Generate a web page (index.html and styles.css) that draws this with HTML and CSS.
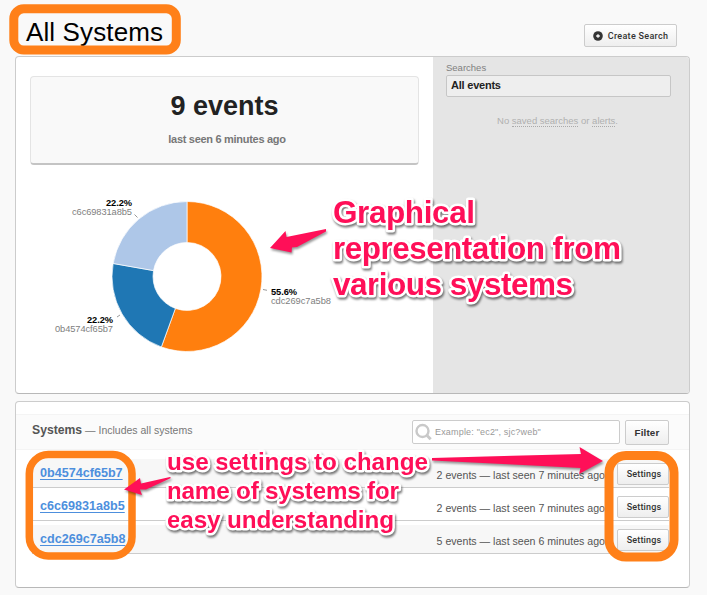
FILE: index.html
```html
<!DOCTYPE html>
<html lang="en">
<head>
<meta charset="utf-8">
<title>All Systems</title>
<link rel="stylesheet" href="styles.css">
</head>
<body>
<header class="top">
  <h1>All Systems</h1>
  <button class="btn create"><svg width="10" height="10" viewBox="0 0 10 10"><circle cx="5" cy="5" r="4.8" fill="#333"/><path d="M5 3.2v3.6M3.2 5h3.6" stroke="#fff" stroke-width="1.3"/></svg><span>Create Search</span></button>
</header>
<main>
  <section class="panel overview">
    <div class="main">
      <div class="card"><h2>9 events</h2><p>last seen 6 minutes ago</p></div>
      <svg class="chart" width="417" height="228" viewBox="16 165 417 228">
        <g stroke="#fff" stroke-width=".7">
          <path fill="#ff7f0e" d="M187 201.5A75 75 0 1 1 161.35 346.98L175.37 308.45A34 34 0 1 0 187 242.5Z"/>
          <path fill="#1f77b4" d="M161.35 346.98A75 75 0 0 1 113.14 263.48L153.52 270.6A34 34 0 0 0 175.37 308.45Z"/>
          <path fill="#aec7e8" d="M113.14 263.48A75 75 0 0 1 187 201.5V242.5A34 34 0 0 0 153.52 270.6Z"/>
        </g>
        <path d="M134.5 214.5l3 3M117 317l3-2M263 289.5l4 .8" stroke="#999" fill="none"/>
        <g class="pct">
          <text x="106" y="206" textLength="26">22.2%</text>
          <text x="87" y="323" textLength="26">22.2%</text>
          <text x="271" y="295" textLength="26">55.6%</text>
        </g>
        <g class="sys">
          <text x="72" y="215" textLength="60">c6c69831a8b5</text>
          <text x="55" y="332" textLength="58">0b4574cf65b7</text>
          <text x="271" y="304" textLength="60">cdc269c7a5b8</text>
        </g>
      </svg>
    </div>
    <aside>
      <h3>Searches</h3>
      <div class="selected">All events</div>
      <p>No <span>saved searches</span> or <span>alerts</span>.</p>
    </aside>
  </section>
  <section class="panel systems">
    <div class="bar">
      <div class="title"><b>Systems</b> <span>— Includes all systems</span></div>
      <div class="search"><svg width="18" height="18" viewBox="0 0 18 18" fill="none" stroke="#c9c9c9"><circle cx="7.5" cy="8" r="6" stroke-width="2.4"/><path d="M12 12.5l3.7 3.7" stroke-width="3"/></svg><span>Example: "ec2", sjc?web"</span></div>
      <button class="btn filter">Filter</button>
    </div>
    <ul>
      <li><a>0b4574cf65b7</a><span>2 events — last seen 7 minutes ago</span><button class="btn">Settings</button></li>
      <li><a>c6c69831a8b5</a><span>2 events — last seen 7 minutes ago</span><button class="btn">Settings</button></li>
      <li><a>cdc269c7a5b8</a><span>5 events — last seen 6 minutes ago</span><button class="btn">Settings</button></li>
    </ul>
  </section>
</main>
<svg class="notes" width="707" height="595" viewBox="0 0 707 595">
  <g fill="none" stroke="#ff8019">
    <rect x="13.8" y="8.8" width="162.5" height="41.2" rx="10" stroke-width="9"/>
    <rect x="29.3" y="454.5" width="102.7" height="101.5" rx="19" stroke-width="7.5"/>
    <rect x="609" y="455.5" width="65" height="101.5" rx="17" stroke-width="9"/>
  </g>
  <g class="arrows">
    <path d="M270 248L285.5 231L286.5 237L326 229V231.5L297 247L292 247.5L291.5 252.5Z"/>
    <path d="M124 489.5L140 478L141 483.5L170 477L171 478L146 489.5L140 489.5L142 495Z"/>
    <path d="M432 458L581 454L579.5 447L603 461L579 474L580.5 468L432 460.5Z"/>
  </g>
  <g class="callout large">
    <text x="333" y="223" textLength="142">Graphical</text>
    <text x="333" y="259" textLength="288">representation from</text>
    <text x="333" y="295" textLength="240">various systems</text>
  </g>
  <g class="callout small">
    <text x="167" y="470" textLength="261">use settings to change</text>
    <text x="167" y="499" textLength="232">name of systems for</text>
    <text x="167" y="528" textLength="227">easy understanding</text>
  </g>
</svg>
</body>
</html>
```
FILE: styles.css
```css
* { box-sizing: border-box; margin: 0; padding: 0; }
body { width: 707px; height: 595px; overflow: hidden; position: relative; background: #f9f9f9; font-family: "Liberation Sans", Arial, sans-serif; color: #222; }
.top { height: 56px; display: flex; justify-content: space-between; align-items: flex-start; padding: 17px 30px 0 26px; }
h1 { font-size: 26px; line-height: 30px; font-weight: 400; color: #000; letter-spacing: .12px; }
.btn { font: 500 9px/20px Roboto, sans-serif; height: 22px; width: 52px; color: #333; background: linear-gradient(#fff, #eee); border: 1px solid #ccc; border-radius: 2px; letter-spacing: .15px; white-space: nowrap; }
.top .create { display: flex; align-items: center; justify-content: center; gap: 5px; width: 93px; height: 23px; margin-top: 7px; letter-spacing: .3px; }
main { display: flex; flex-direction: column; gap: 7px; padding: 0 17px 0 15px; }
.panel { background: #fff; border: 1px solid #ccc; border-bottom-color: #b8b8b8; border-radius: 4px; overflow: hidden; }
.overview { height: 338px; display: flex; }
.main { width: 417px; }
.card { height: 89px; margin: 19px 14px 0; text-align: center; background: #f9f9f9; border: 1px solid #e4e4e4; border-bottom: 2px solid #c4c4c4; border-radius: 4px; padding-top: 13px; }
h2 { font-size: 27px; line-height: 33px; }
.card p { font-size: 11px; line-height: 14px; font-weight: 700; color: #777; margin-top: 9px; padding-left: 5px; letter-spacing: -.29px; }
.chart { display: block; font-size: 9.3px; }
.pct { font-weight: 700; fill: #000; }
.sys { fill: #808080; }
aside { flex: 1; background: #e5e5e5; padding: 5px 18px 0 13px; }
h3 { font-size: 9.5px; line-height: 12px; font-weight: 400; color: #808080; }
.selected { height: 22px; margin-top: 1px; padding-left: 4px; border: 1px solid #c6c6c6; border-radius: 2px; background: #eee; font-size: 11px; line-height: 19px; font-weight: 700; letter-spacing: -.22px; }
aside p { margin-top: 18px; text-align: center; font-size: 9.5px; line-height: 11px; color: #b0b0b0; padding-right: 2px; }
aside p span { border-bottom: 1px dotted #aaa; }
.systems { height: 187px; padding-top: 12px; }
.bar { height: 36px; background: #fbfbfb; border-top: 1px solid #f4f4f4; border-bottom: 1px solid #f4f4f4; display: flex; padding: 5px 20px 0 16px; }
.title { flex: 1; line-height: 21px; font-size: 10.5px; color: #777; white-space: nowrap; }
.title b { font-size: 12.2px; color: #555; }
.search { width: 208px; height: 24px; border: 1px solid #ccc; border-radius: 2px; background: #fff; display: flex; align-items: center; padding-left: 2px; gap: 2px; font-size: 9px; letter-spacing: .18px; color: #999; }
.bar .filter { width: 44px; height: 25px; margin-left: 5px; font: 700 9.8px/23px "Liberation Sans", sans-serif; }
ul { list-style: none; margin: 9px 20px 0 16px; }
li { height: 29px; margin-bottom: 4px; border-bottom: 1px solid #ccc; display: flex; align-items: flex-start; }
li:nth-child(odd) { background: #f7f7f7; }
li a { flex: 1; padding-left: 8px; font-size: 12.6px; line-height: 29px; font-weight: 700; color: #4d8fdd; text-decoration: underline; text-underline-offset: 2px; }
li span { font-size: 10.6px; line-height: 33px; color: #555; margin-right: 12px; white-space: nowrap; }
li .btn { margin-top: 4px; padding-left: 2px; }
.notes { position: absolute; left: 0; top: 0; pointer-events: none; }
.arrows { fill: #ff0f58; filter: drop-shadow(1px 2px 1px #0006); }
.callout { font-weight: 700; fill: #ff0f58; stroke: #fff; stroke-linejoin: round; paint-order: stroke; filter: drop-shadow(1px 2px 1px #0008); }
.large { font-size: 31.5px; stroke-width: 5px; }
.small { font-size: 24.3px; stroke-width: 5px; }
```
